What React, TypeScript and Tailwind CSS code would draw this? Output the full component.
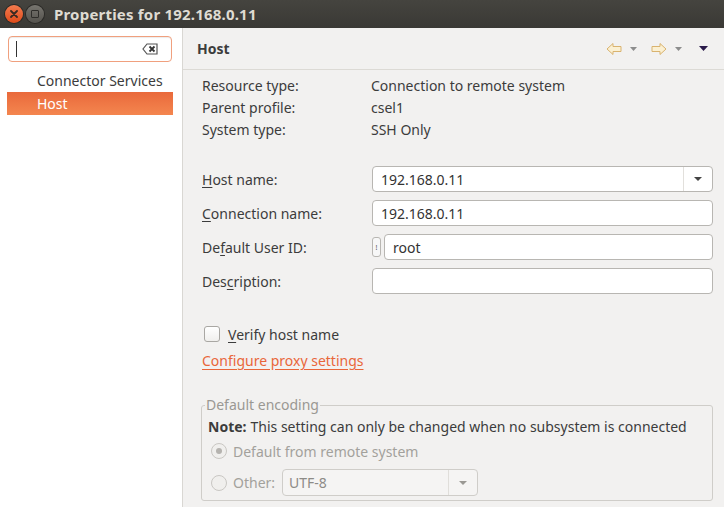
import React from "react";

const font = { fontFamily: '"Noto Sans", "DejaVu Sans", sans-serif' };

const TitleBar = () => (
  <div className="flex h-[28px] items-center bg-gradient-to-b from-[#45443f] to-[#3a3935] px-[5px]">
    <div className="flex h-[18px] w-[18px] items-center justify-center rounded-full bg-gradient-to-b from-[#f37a4d] to-[#df4a16] shadow-[0_0_0_1px_#2b2a27]">
      <svg width="8" height="8" viewBox="0 0 8 8">
        <path d="M1 1 L7 7 M7 1 L1 7" stroke="#3a2a22" strokeWidth="1.8" strokeLinecap="round" />
      </svg>
    </div>
    <div className="ml-[3px] flex h-[18px] w-[18px] items-center justify-center rounded-full bg-gradient-to-b from-[#77756f] to-[#55534e] shadow-[0_0_0_1px_#2b2a27]">
      <div className="h-[8px] w-[8px] rounded-[1px] border border-[#2f2e2b]" />
    </div>
    <span className="ml-[10px] text-[15px] font-bold tracking-[0.2px] text-[#dfdbd2]">
      Properties for 192.168.0.11
    </span>
  </div>
);

const Sidebar = () => (
  <div className="flex w-[183px] shrink-0 flex-col border-r border-[#d9d7d3] bg-white pt-[8px]">
    <div className="ml-[8px] mr-[10px] flex h-[26px] items-center rounded-[4px] border border-[#f0a07e] bg-white pl-[7px] pr-[13px] shadow-[inset_0_1px_1px_rgba(0,0,0,0.08)]">
      <div className="h-[16px] w-[1px] bg-[#333]" />
      <div className="flex-1" />
      <svg width="16" height="12" viewBox="0 0 16 12">
        <path d="M5 1 H15 V11 H5 L1 6 Z" fill="none" stroke="#555" strokeWidth="1.2" />
        <path d="M7.5 3.5 L12.5 8.5 M12.5 3.5 L7.5 8.5" stroke="#333" strokeWidth="1.8" />
      </svg>
    </div>
    <div className="mt-[6px] flex h-[24px] items-center pl-[37px] text-[14px] text-[#3c3c3c]">
      Connector Services
    </div>
    <div className="ml-[7px] mr-[9px] flex h-[23px] items-center bg-gradient-to-b from-[#e9693b] to-[#f4864f] pl-[30px] text-[14px] text-white">
      Host
    </div>
  </div>
);

const Arrow = ({ dir }: { dir: "left" | "right" }) => (
  <svg width="16" height="14" viewBox="0 0 16 14">
    <path
      d={
        dir === "left"
          ? "M1 7 L7 1.5 V4.5 H15 V9.5 H7 V12.5 Z"
          : "M15 7 L9 1.5 V4.5 H1 V9.5 H9 V12.5 Z"
      }
      fill="#fbf0d2"
      stroke="#d9b36f"
      strokeWidth="1"
      strokeLinejoin="round"
    />
  </svg>
);

const SmallTri = ({ color = "#8d8d8d", w = 7, h = 4 }: { color?: string; w?: number; h?: number }) => (
  <svg width={w} height={h} viewBox={`0 0 ${w} ${h}`}>
    <path d={`M0 0 H${w} L${w / 2} ${h} Z`} fill={color} />
  </svg>
);

const Input = ({ value, className = "" }: { value?: string; className?: string }) => (
  <div
    className={`flex h-[26px] items-center rounded-[4px] border border-[#b8b6b2] bg-white px-[8px] text-[14px] text-[#333] ${className}`}
  >
    {value}
  </div>
);

const FieldRow = ({ label, u, children }: { label: string; u: number; children: React.ReactNode }) => (
  <div className="flex h-[26px] items-center">
    <div className="w-[170px] shrink-0 text-[14px] text-[#3c3c3c]">
      {label.slice(0, u)}
      <span className="underline underline-offset-2">{label[u]}</span>
      {label.slice(u + 1)}
    </div>
    <div className="flex flex-1 items-center">{children}</div>
  </div>
);

export default function App() {
  return (
    <div className="flex h-[507px] w-[724px] flex-col overflow-hidden bg-[#f2f1f0]" style={font}>
      <TitleBar />
      <div className="flex flex-1">
        <Sidebar />
        <div className="flex flex-1 flex-col">
          <div className="flex h-[42px] items-center justify-between border-b border-[#dcdad5] pl-[14px] pr-[16px]">
            <span className="text-[14px] font-bold text-[#3c3c3c]">Host</span>
            <div className="flex items-center">
              <Arrow dir="left" />
              <div className="ml-[8px]"><SmallTri /></div>
              <div className="ml-[14px]"><Arrow dir="right" /></div>
              <div className="ml-[8px]"><SmallTri /></div>
              <div className="ml-[17px]"><SmallTri color="#2a1a4a" w={9} h={5} /></div>
            </div>
          </div>

          <div className="flex flex-col pl-[19px] pr-[11px] pt-[4px]">
            {[
              ["Resource type:", "Connection to remote system"],
              ["Parent profile:", "csel1"],
              ["System type:", "SSH Only"],
            ].map(([k, v]) => (
              <div key={k} className="flex h-[22px] items-center text-[14px] text-[#3c3c3c]">
                <div className="w-[169px] shrink-0">{k}</div>
                <div>{v}</div>
              </div>
            ))}

            <div className="mt-[26px] flex flex-col gap-[8px]">
              <FieldRow label="Host name:" u={0}>
                <div className="flex h-[26px] flex-1 items-center rounded-[4px] border border-[#b8b6b2] bg-white text-[14px] text-[#333]">
                  <span className="flex-1 px-[8px]">192.168.0.11</span>
                  <div className="flex h-full w-[29px] items-center justify-center border-l border-[#e2e0dc]">
                    <SmallTri color="#444" w={8} h={4} />
                  </div>
                </div>
              </FieldRow>
              <FieldRow label="Connection name:" u={0}>
                <Input value="192.168.0.11" className="flex-1" />
              </FieldRow>
              <FieldRow label="Default User ID:" u={2}>
                <div className="flex h-[20px] w-[9px] items-center justify-center rounded-[3px] border border-[#b8b6b2] bg-[#f7f7f7] text-[7px] leading-none text-[#555]">
                  !
                </div>
                <Input value="root" className="ml-[3px] flex-1" />
              </FieldRow>
              <FieldRow label="Description:" u={3}>
                <Input className="flex-1" />
              </FieldRow>
            </div>

            <label className="mt-[31px] flex h-[18px] items-center">
              <div className="ml-[2px] h-[16px] w-[16px] rounded-[3px] border border-[#a9a7a3] bg-gradient-to-b from-white to-[#f0efed]" />
              <span className="ml-[8px] text-[14px] text-[#3c3c3c]">
                <span className="underline underline-offset-2">V</span>erify host name
              </span>
            </label>

            <div className="mt-[8px] flex h-[18px] items-center">
              <span className="text-[14px] text-[#e9663a] underline underline-offset-[3px]">
                Configure proxy settings
              </span>
            </div>

            <div className="relative -ml-[1px] mt-[36px] h-[96px] rounded-[3px] border border-[#cfcdc9]">
              <span className="absolute -top-[10px] left-[3px] bg-[#f2f1f0] px-[1px] text-[14px] leading-[18px] text-[#9a9893]">
                Default encoding
              </span>
              <div className="flex flex-col pl-[6px] pt-[10px]">
                <div className="flex h-[20px] items-center text-[14px] text-[#3c3c3c]">
                  <span className="font-bold">Note:</span>
                  <span className="ml-[4px]">This setting can only be changed when no subsystem is connected</span>
                </div>
                <div className="ml-[3px] mt-[5px] flex h-[20px] items-center">
                  <div className="flex h-[16px] w-[16px] items-center justify-center rounded-full border border-[#c9c7c3] bg-[#f0efed]">
                    <div className="h-[6px] w-[6px] rounded-full bg-[#b5b3af]" />
                  </div>
                  <span className="ml-[6px] text-[14px] text-[#a3a19c]">Default from remote system</span>
                </div>
                <div className="ml-[3px] mt-[8px] flex h-[27px] items-center">
                  <div className="h-[16px] w-[16px] rounded-full border border-[#c9c7c3] bg-[#f0efed]" />
                  <span className="ml-[6px] text-[14px] text-[#a3a19c]">Other:</span>
                  <div className="ml-[7px] flex h-[27px] w-[196px] items-center rounded-[4px] border border-[#cfcdc9] bg-[#f5f4f3] text-[14px] text-[#8d8b87]">
                    <span className="flex-1 px-[6px]">UTF-8</span>
                    <div className="flex h-full w-[29px] items-center justify-center border-l border-[#e0deda]">
                      <SmallTri color="#9a9893" w={8} h={4} />
                    </div>
                  </div>
                </div>
              </div>
            </div>
          </div>
        </div>
      </div>
    </div>
  );
}
